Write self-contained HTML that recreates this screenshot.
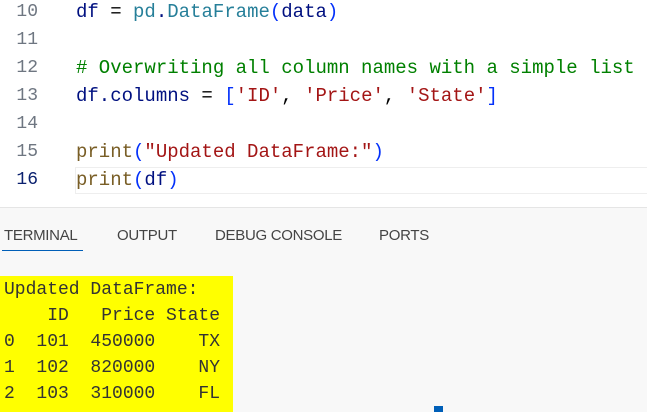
<!DOCTYPE html>
<html><head><style>
body{margin:0;width:647px;height:411px;overflow:hidden;background:#fff;position:relative;font-family:"Liberation Mono",monospace}
.ln{position:absolute;left:0;width:38px;text-align:right;font-size:18px;color:#6e7681;}
.code{position:absolute;left:76px;font-size:19px;white-space:pre;color:#001080}
.k{color:#267f99}.f{color:#795e26}.s{color:#a31515}.c{color:#008000}.p{color:#0431fa}.d{color:#000}
#panel{position:absolute;left:0;top:207px;width:647px;height:204px;background:#f8f8f8;border-top:1px solid #e5e5e5}
.tab{position:absolute;top:19px;font-family:"Liberation Sans",sans-serif;font-size:15px;color:#444;letter-spacing:-0.3px}
#yb{position:absolute;left:0;top:68px;width:233px;height:136px;background:#ffff00}
.t{position:absolute;left:4px;font-size:18px;white-space:pre;color:#333;}
</style></head><body>
<div class="ln" style="top:2px">10</div>
<div class="ln" style="top:30px">11</div>
<div class="ln" style="top:58px">12</div>
<div class="ln" style="top:86px">13</div>
<div class="ln" style="top:114px">14</div>
<div class="ln" style="top:142px">15</div>
<div class="ln" style="top:170px;color:#0b216f">16</div>
<div style="position:absolute;left:75px;top:167px;width:580px;height:25px;border:1px solid #eee"></div>
<div class="code" style="top:1px">df <span class="d">=</span> <span class="k">pd</span>.<span class="k">DataFrame</span><span class="p">(</span>data<span class="p">)</span></div>
<div class="code c" style="top:57px"># Overwriting all column names with a simple list</div>
<div class="code" style="top:85px">df.columns <span class="d">=</span> <span class="p">[</span><span class="s">'ID'</span><span class="d">,</span> <span class="s">'Price'</span><span class="d">,</span> <span class="s">'State'</span><span class="p">]</span></div>
<div class="code" style="top:141px"><span class="f">print</span><span class="p">(</span><span class="s">"Updated DataFrame:"</span><span class="p">)</span></div>
<div class="code" style="top:169px"><span class="f">print</span><span class="p">(</span>df<span class="p">)</span></div>
<div id="panel">
<div class="tab" style="left:4px">TERMINAL</div>
<div style="position:absolute;left:2px;top:42px;width:81px;height:1px;background:#005fb8"></div>
<div class="tab" style="left:117px">OUTPUT</div>
<div class="tab" style="left:215px">DEBUG CONSOLE</div>
<div class="tab" style="left:379px">PORTS</div>
<div id="yb">
<div class="t" style="top:4px">Updated DataFrame:</div>
<div class="t" style="top:30px">    ID   Price State</div>
<div class="t" style="top:56px">0  101  450000    TX</div>
<div class="t" style="top:82px">1  102  820000    NY</div>
<div class="t" style="top:108px">2  103  310000    FL</div>
</div>
<div style="position:absolute;left:434px;top:198px;width:9px;height:6px;background:#005fb8"></div>
</div>
</body></html>
